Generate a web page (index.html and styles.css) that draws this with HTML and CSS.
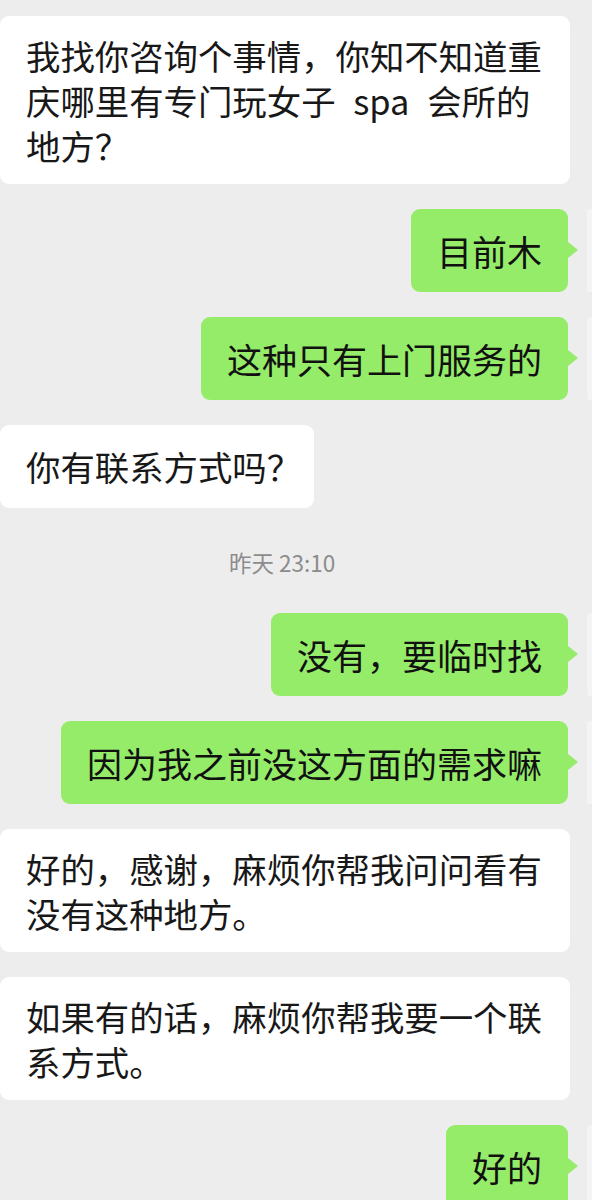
FILE: index.html
```html
<!DOCTYPE html>
<html lang="zh-CN">
<head>
<meta charset="utf-8">
<title>聊天</title>
<link rel="stylesheet" href="styles.css">
</head>
<body>
<div class="chat">
  <div class="row in">
    <div class="bubble white wide-space"><div class="text">我找你咨询个事情，你知不知道重庆哪里有专门玩女子 spa 会所的地方？</div></div>
  </div>
  <div class="row out">
    <div class="bubble green"><div class="text">目前木</div></div>
    <div class="avatar"></div>
  </div>
  <div class="row out">
    <div class="bubble green"><div class="text">这种只有上门服务的</div></div>
    <div class="avatar"></div>
  </div>
  <div class="row in">
    <div class="bubble white half-punct"><div class="text">你有联系方式吗？</div></div>
  </div>
  <div class="time">昨天 23:10</div>
  <div class="row out">
    <div class="bubble green"><div class="text">没有，要临时找</div></div>
    <div class="avatar"></div>
  </div>
  <div class="row out">
    <div class="bubble green"><div class="text">因为我之前没这方面的需求嘛</div></div>
    <div class="avatar"></div>
  </div>
  <div class="row in">
    <div class="bubble white"><div class="text">好的，感谢，麻烦你帮我问问看有没有这种地方。</div></div>
  </div>
  <div class="row in">
    <div class="bubble white"><div class="text">如果有的话，麻烦你帮我要一个联系方式。</div></div>
  </div>
  <div class="row out">
    <div class="bubble green"><div class="text">好的</div></div>
    <div class="avatar"></div>
  </div>
</div>
</body>
</html>
```

FILE: styles.css
```css
html, body {
  margin: 0;
  padding: 0;
  background: #ededed;
}

body {
  width: 592px;
  height: 1200px;
  overflow: hidden;
  font-family: "Noto Sans CJK SC", "Noto Sans", sans-serif;
}

.chat {
  display: flex;
  flex-direction: column;
  gap: 25px;
  padding-top: 16px;
}

.row {
  display: flex;
  align-items: flex-start;
}

.row.in {
  justify-content: flex-start;
}

.row.out {
  justify-content: flex-end;
}

.bubble {
  position: relative;
  display: flex;
  align-items: center;
  box-sizing: border-box;
  min-height: 83px;
  border-radius: 9px;
  line-height: 45px;
}

.white {
  max-width: 570px;
  padding: 16.5px 25px 16.5px 26px;
  background: #ffffff;
  font-size: 34.4px;
  color: #181818;
}

.wide-space {
  word-spacing: 10px;
}

.half-punct {
  font-feature-settings: "halt";
  padding-right: 30px;
}

.green {
  max-width: 520px;
  padding: 16.5px 26px;
  background: #95ec69;
  font-size: 35px;
  color: #111111;
}

.green::after {
  content: "";
  position: absolute;
  right: -10px;
  top: 33px;
  border-left: 10px solid #95ec69;
  border-top: 8px solid transparent;
  border-bottom: 8px solid transparent;
}

.text {
  min-width: 0;
}

.avatar {
  flex: none;
  width: 5px;
  height: 83px;
  margin-left: 19px;
  background: #f4f4f4;
  border-radius: 3px 0 0 3px;
}

.time {
  width: 564px;
  text-align: center;
  font-size: 22.5px;
  line-height: 30px;
  color: #8c8c8c;
  margin: 14px 0 11px;
}
```
